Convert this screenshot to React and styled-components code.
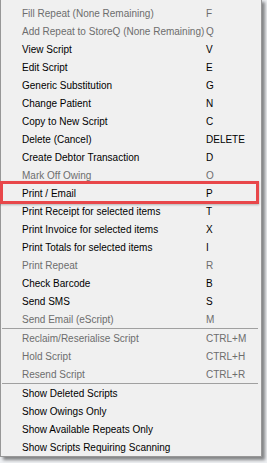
import styled, { createGlobalStyle } from "styled-components";

const GlobalStyle = createGlobalStyle`
  html, body {
    margin: 0;
    padding: 0;
    background: #f0f0f0;
  }
`;

const Page = styled.div`
  width: 267px;
  height: 463px;
  position: relative;
  overflow: hidden;
  background: #eef0f3;
`;

const Menu = styled.div`
  width: 260px;
  margin-top: -1px;
  padding: 4px 0 0;
  background: #f0f0f0;
  border: 1px solid #979797;
  box-shadow: 3px 3px 3px rgba(0, 0, 0, 0.45);
  font-family: "Liberation Sans", Arial, sans-serif;
  font-size: 10px;
  position: relative;
`;

const Row = styled.div`
  display: grid;
  grid-template-columns: 184px 1fr;
  align-items: center;
  height: 18px;
  padding-left: 21px;
  color: ${(p) => (p.disabled ? "#6d6d6d" : "#000")};
  white-space: nowrap;
`;

const Separator = styled.div`
  height: 1px;
  margin: 0 3px 0 1px;
  background: #a0a0a0;
`;

const Highlight = styled.div`
  position: absolute;
  left: -1px;
  top: 181px;
  width: 253px;
  height: 17px;
  border: 3px solid #e8474a;
  box-shadow: 0 1px 2px rgba(0, 0, 0, 0.25);
  pointer-events: none;
`;

const groups = [
  [
    ["Fill Repeat (None Remaining)", "F", true],
    ["Add Repeat to StoreQ (None Remaining)", "Q", true],
    ["View Script", "V"],
    ["Edit Script", "E"],
    ["Generic Substitution", "G"],
    ["Change Patient", "N"],
    ["Copy to New Script", "C"],
    ["Delete (Cancel)", "DELETE"],
    ["Create Debtor Transaction", "D"],
    ["Mark Off Owing", "O", true],
    ["Print / Email", "P"],
    ["Print Receipt for selected items", "T"],
    ["Print Invoice for selected items", "X"],
    ["Print Totals for selected items", "I"],
    ["Print Repeat", "R", true],
    ["Check Barcode", "B"],
    ["Send SMS", "S"],
    ["Send Email (eScript)", "M", true],
  ],
  [
    ["Reclaim/Reserialise Script", "CTRL+M", true],
    ["Hold Script", "CTRL+H", true],
    ["Resend Script", "CTRL+R", true],
  ],
  [
    ["Show Deleted Scripts", ""],
    ["Show Owings Only", ""],
    ["Show Available Repeats Only", ""],
    ["Show Scripts Requiring Scanning", ""],
  ],
];

export default function App() {
  return (
    <>
      <GlobalStyle />
      <Page>
        <Menu>
          {groups.map((items, gi) => (
            <div key={gi}>
              {gi > 0 && <Separator />}
              {items.map(([label, key, disabled]) => (
                <Row key={label} disabled={disabled}>
                  <span>{label}</span>
                  <span>{key}</span>
                </Row>
              ))}
            </div>
          ))}
          <Highlight />
        </Menu>
      </Page>
    </>
  );
}
